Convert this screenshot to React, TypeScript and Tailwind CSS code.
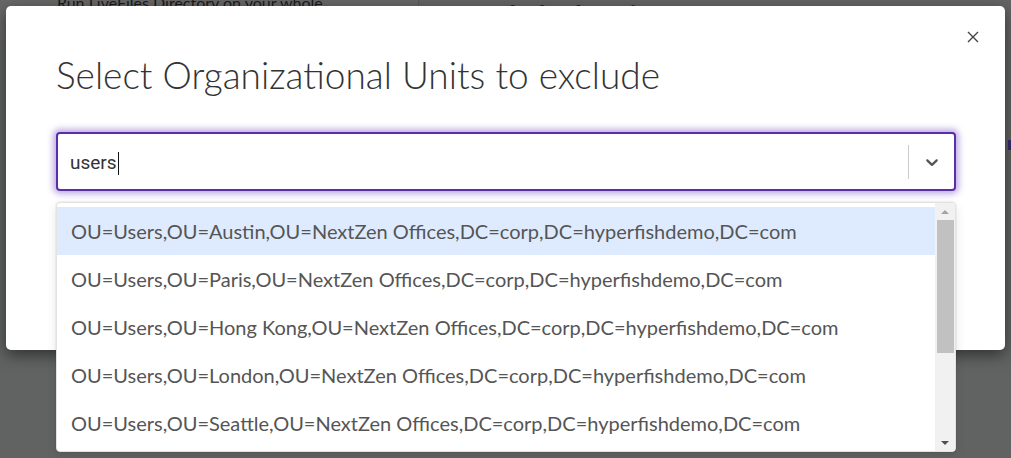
import React from "react";

const options = [
  "OU=Users,OU=Austin,OU=NextZen Offices,DC=corp,DC=hyperfishdemo,DC=com",
  "OU=Users,OU=Paris,OU=NextZen Offices,DC=corp,DC=hyperfishdemo,DC=com",
  "OU=Users,OU=Hong Kong,OU=NextZen Offices,DC=corp,DC=hyperfishdemo,DC=com",
  "OU=Users,OU=London,OU=NextZen Offices,DC=corp,DC=hyperfishdemo,DC=com",
  "OU=Users,OU=Seattle,OU=NextZen Offices,DC=corp,DC=hyperfishdemo,DC=com",
];

export default function App() {
  return (
    <div className="relative w-[1011px] h-[458px] overflow-hidden bg-[#616262] font-['Lato',sans-serif]">
      {/* background page behind overlay */}
      <div className="flex h-[40px]">
        <div className="w-[419px] bg-[#676767] border-r border-[#5a5a5a] pl-[57px]">
          <div className="-mt-[7px] text-[16px] text-[#1a1a1a] leading-[20px]">Run LiveFiles Directory on your whole</div>
        </div>
        <div className="flex-1 bg-[#646464] pl-[50px]">
          <div className="mt-[0px] text-[26px] font-bold text-[#222] leading-[30px]">Exclude the Di</div>
        </div>
      </div>
      <div className="absolute right-0 top-[140px] w-[3px] h-[10px] bg-[#3b2a6e]" />

      {/* modal */}
      <div className="absolute left-[6px] top-[6px] w-[999px] h-[344px] bg-white rounded-[5px] shadow-[0_5px_15px_rgba(0,0,0,0.5)]">
        <button className="absolute right-[25px] top-[24px] w-[14px] h-[14px] flex items-center justify-center text-[#444]">
          <svg width="12" height="12" viewBox="0 0 12 12" fill="none" stroke="currentColor" strokeWidth="1.4">
            <path d="M1 1L11 11M11 1L1 11" />
          </svg>
        </button>
        <div className="pl-[50px] pr-[49px] pt-[47px]">
          <h2 className="text-[37px] font-light text-[#333] leading-[44px]">Select Organizational Units to exclude</h2>
          <div className="relative mt-[35px]">
            <div className="flex items-center h-[59px] border-2 border-[#5a2fa6] rounded-[4px] bg-white shadow-[0_0_6px_3px_rgba(110,70,200,0.45)]">
              <div className="flex-1 pl-[12px] pt-[3px] flex items-center font-['Roboto',sans-serif] text-[19px] text-[#333]">
                users<span className="inline-block w-[1px] h-[23px] bg-[#111] ml-[1px]" />
              </div>
              <div className="w-[1px] h-[34px] bg-[#cccccc]" />
              <div className="w-[45px] flex items-center justify-center text-[#555]">
                <svg width="20" height="20" viewBox="0 0 20 20" fill="currentColor">
                  <path d="M4.516 7.548c0.436-0.446 1.043-0.481 1.576 0l3.908 3.747 3.908-3.747c0.533-0.481 1.141-0.446 1.574 0 0.436 0.445 0.408 1.197 0 1.615-0.406 0.418-4.695 4.502-4.695 4.502-0.217 0.223-0.502 0.335-0.787 0.335s-0.57-0.112-0.789-0.335c0 0-4.287-4.084-4.695-4.502s-0.436-1.17 0-1.615z" />
                </svg>
              </div>
            </div>
            {/* menu */}
            <div className="absolute left-0 right-0 top-[70px] h-[250px] bg-white border border-[#e3e3e3] rounded-[4px] shadow-[0_0_0_1px_rgba(0,0,0,0.04),0_4px_11px_rgba(0,0,0,0.1)] flex overflow-hidden">
              <div className="flex-1 pt-[4px]">
                {options.map((o, i) => (
                  <div
                    key={o}
                    className={`h-[48px] flex items-center pl-[14px] text-[20px] text-[#555] whitespace-nowrap ${i === 0 ? "bg-[#deebff]" : ""}`}
                  >
                    {o}
                  </div>
                ))}
              </div>
              <div className="w-[20px] bg-[#f1f1f1] flex flex-col items-center">
                <div className="h-[17px] flex items-center justify-center">
                  <div className="w-0 h-0 border-l-[4px] border-r-[4px] border-b-[4px] border-l-transparent border-r-transparent border-b-[#a3a3a3]" />
                </div>
                <div className="w-[17px] h-[133px] bg-[#c1c1c1]" />
                <div className="flex-1" />
                <div className="h-[17px] flex items-center justify-center">
                  <div className="w-0 h-0 border-l-[4px] border-r-[4px] border-t-[4px] border-l-transparent border-r-transparent border-t-[#505050]" />
                </div>
              </div>
            </div>
          </div>
        </div>
      </div>
    </div>
  );
}
